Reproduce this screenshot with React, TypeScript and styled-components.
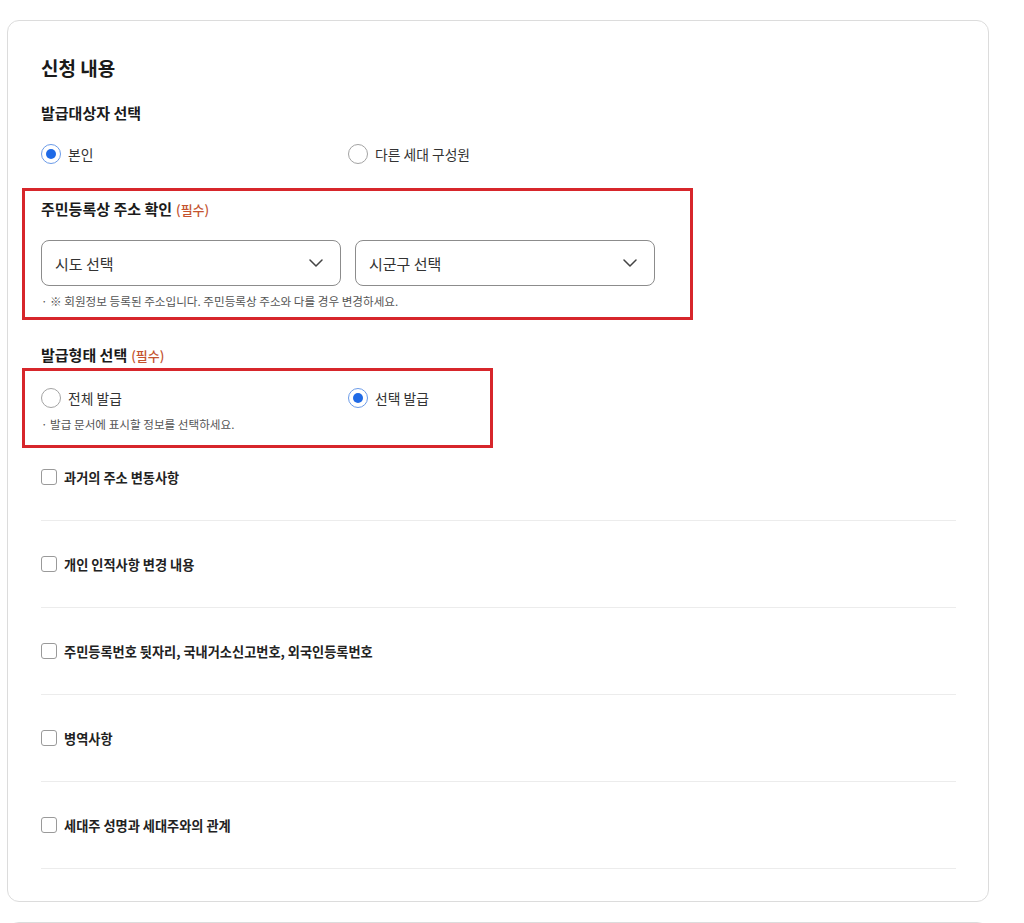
import React from "react";
import styled, { createGlobalStyle } from "styled-components";

const GlobalStyle = createGlobalStyle`
  html, body {
    margin: 0;
    padding: 0;
    background: #ffffff;
  }
  body {
    font-family: "Noto Sans CJK KR", "Noto Sans", "Liberation Sans", sans-serif;
    color: #222;
  }
  * { box-sizing: border-box; }
`;

const Page = styled.div`
  padding: 20px 35px 0 7px;
`;

const Card = styled.section`
  border: 1px solid #dcdcdc;
  border-radius: 12px;
  padding: 33px 32px 32px 33px;
  background: #fff;
`;

const NextCard = styled.section`
  margin-top: 20px;
  border: 1px solid #dcdcdc;
  border-radius: 12px;
  height: 120px;
  background: #fff;
`;

const Heading = styled.h2`
  margin: 0 0 21px;
  font-size: 19px;
  line-height: 28px;
  font-weight: 700;
  color: #1a1a1a;
`;

const SectionTitle = styled.h3<{ $gap: number; $top?: number }>`
  margin: ${(p) => p.$top ?? 0}px 0 ${(p) => p.$gap}px;
  font-size: 15px;
  line-height: 20px;
  font-weight: 700;
  color: #1a1a1a;
`;

const Required = styled.span`
  margin-left: 4px;
  font-weight: 500;
  font-size: 13px;
  color: #c4532f;
`;

const RadioGroup = styled.div`
  display: grid;
  grid-template-columns: 307px 307px;
  height: 20px;
`;

const RadioItem = styled.label`
  display: flex;
  align-items: center;
  gap: 7px;
  font-size: 13.8px;
  line-height: 20px;
  color: #333;
  cursor: pointer;
`;

const RadioCircle = styled.span<{ $checked?: boolean }>`
  position: relative;
  width: 20px;
  height: 20px;
  border-radius: 50%;
  border: 1.5px solid ${(p) => (p.$checked ? "#6b9be8" : "#a3a3a3")};
  background: #fff;
  flex-shrink: 0;
  &::after {
    content: "";
    display: ${(p) => (p.$checked ? "block" : "none")};
    position: absolute;
    left: 50%;
    top: 50%;
    width: 10px;
    height: 10px;
    margin: -5px 0 0 -5px;
    border-radius: 50%;
    background: #1f6ae6;
  }
`;

const Highlight = styled.div<{ $width: number; $top: number; $pt: number; $pb: number; $mb?: number }>`
  width: ${(p) => p.$width}px;
  margin: ${(p) => p.$top}px 0 ${(p) => p.$mb ?? 0}px -19px;
  padding: ${(p) => p.$pt}px 16px ${(p) => p.$pb}px 16px;
  border: 3px solid #d7262b;
`;

const BoxTitle = styled.div`
  margin-bottom: 20px;
  font-size: 15px;
  line-height: 20px;
  font-weight: 700;
  color: #1a1a1a;
`;

const SelectRow = styled.div`
  display: flex;
  gap: 14px;
`;

const SelectBox = styled.div`
  width: 300px;
  height: 46px;
  border: 1px solid #8c8c8c;
  border-radius: 8px;
  display: flex;
  align-items: center;
  justify-content: space-between;
  padding: 0 17px 0 13px;
  font-size: 15px;
  color: #333;
  background: #fff;
`;

const Note = styled.p<{ $top: number }>`
  margin: ${(p) => p.$top}px 0 0;
  font-size: 11.6px;
  line-height: 16px;
  color: #555;
`;

const List = styled.ul`
  list-style: none;
  margin: 0;
  padding: 0;
`;

const CheckRow = styled.li`
  padding: 33px 0;
  border-bottom: 1px solid #ececec;
`;

const CheckLabel = styled.label`
  display: flex;
  align-items: center;
  gap: 7px;
  height: 20px;
  font-size: 13.2px;
  font-weight: 700;
  color: #222;
`;

const CheckBox = styled.span`
  width: 16px;
  height: 16px;
  border: 1px solid #9a9a9a;
  border-radius: 3px;
  background: #fff;
  flex-shrink: 0;
`;

const Chevron = () => (
  <svg width="14" height="8" viewBox="0 0 14 8" fill="none">
    <path d="M1 1l6 6 6-6" stroke="#444" strokeWidth="1.5" strokeLinecap="round" strokeLinejoin="round" />
  </svg>
);

const Radio = ({ label, checked }: { label: string; checked?: boolean }) => (
  <RadioItem>
    <RadioCircle $checked={checked} />
    {label}
  </RadioItem>
);

const items = [
  "과거의 주소 변동사항",
  "개인 인적사항 변경 내용",
  "주민등록번호 뒷자리, 국내거소신고번호, 외국인등록번호",
  "병역사항",
  "세대주 성명과 세대주와의 관계",
];

export default function App() {
  return (
    <>
      <GlobalStyle />
      <Page>
        <Card>
          <Heading>신청 내용</Heading>
          <SectionTitle $gap={21}>발급대상자 선택</SectionTitle>
          <RadioGroup>
            <Radio label="본인" checked />
            <Radio label="다른 세대 구성원" />
          </RadioGroup>

          <Highlight $width={671} $top={24} $pt={8} $pb={8}>
            <BoxTitle>
              주민등록상 주소 확인<Required>(필수)</Required>
            </BoxTitle>
            <SelectRow>
              <SelectBox>
                시도 선택
                <Chevron />
              </SelectBox>
              <SelectBox>
                시군구 선택
                <Chevron />
              </SelectBox>
            </SelectRow>
            <Note $top={7}>· ※ 회원정보 등록된 주소입니다. 주민등록상 주소와 다를 경우 변경하세요.</Note>
          </Highlight>

          <SectionTitle $gap={0} $top={25}>
            발급형태 선택<Required>(필수)</Required>
          </SectionTitle>
          <Highlight $width={471} $top={2} $pt={17} $pb={13} $mb={-14}>
            <RadioGroup>
              <Radio label="전체 발급" />
              <Radio label="선택 발급" checked />
            </RadioGroup>
            <Note $top={8}>· 발급 문서에 표시할 정보를 선택하세요.</Note>
          </Highlight>

          <List>
            {items.map((t) => (
              <CheckRow key={t}>
                <CheckLabel>
                  <CheckBox />
                  {t}
                </CheckLabel>
              </CheckRow>
            ))}
          </List>
        </Card>
        <NextCard />
      </Page>
    </>
  );
}
